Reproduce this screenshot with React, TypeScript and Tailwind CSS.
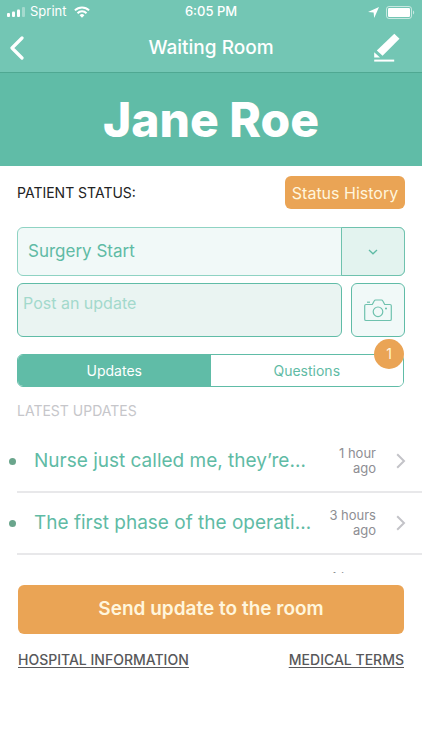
import React, { useState } from 'react';

const updates = [
  { text: 'Nurse just called me, they’re…', amount: '1 hour' },
  { text: 'The first phase of the operation is done', amount: '3 hours' },
  { text: 'Jane is being taken into surgery now', amount: '4 hours' },
];

const StatusBar = () => (
  <div className="grid h-6 grid-cols-3 items-center px-[7px] text-[13px] text-white">
    <div className="flex items-center gap-1">
      <svg width="18" height="10" viewBox="0 0 18 10" fill="currentColor" aria-hidden="true">
        <rect x="0" y="6" width="3" height="4" rx="1" />
        <rect x="5" y="4.5" width="3" height="5.5" rx="1" />
        <rect x="10" y="2.5" width="3" height="7.5" rx="1" />
        <rect x="15" y="0" width="3" height="10" rx="1" opacity="0.35" />
      </svg>
      <span className="ml-px">Sprint</span>
      <svg className="ml-1" width="16" height="12" viewBox="0 0 16 12" fill="none" stroke="currentColor" strokeWidth="2" aria-hidden="true">
        <path d="M0.9 4.4a10.2 10.2 0 0 1 14.2 0" />
        <path d="M3.5 7.2a6.4 6.4 0 0 1 9 0" />
        <path d="M8 11.8L5.6 9.3a3.4 3.4 0 0 1 4.8 0z" fill="currentColor" stroke="none" />
      </svg>
    </div>
    <span className="text-center font-medium">6:05 PM</span>
    <div className="flex items-center justify-end gap-[7px]">
      <svg width="11" height="11" viewBox="0 0 11 11" fill="currentColor" aria-hidden="true">
        <path d="M11 0L6.2 11L5.6 5.4L0 4.9z" />
      </svg>
      <svg width="29" height="13" viewBox="0 0 29 13" fill="none" aria-hidden="true">
        <rect x="0.5" y="0.5" width="25" height="12" rx="2.5" stroke="white" opacity="0.6" />
        <rect x="2" y="2" width="22" height="9" rx="1.2" fill="white" />
        <path d="M27 4.5c1.6 0.6 1.6 3.4 0 4z" fill="white" opacity="0.6" />
      </svg>
    </div>
  </div>
);

const NavBar = () => (
  <div className="flex h-12 items-center justify-between px-[9px] text-white">
    <button type="button" aria-label="Back" className="flex w-9">
      <svg width="16" height="24" viewBox="0 0 16 24" fill="none" stroke="currentColor" strokeWidth="3.2" strokeLinecap="round" strokeLinejoin="round">
        <path d="M13 2L3 12l10 10" />
      </svg>
    </button>
    <h1 className="text-[19px] font-medium">Waiting Room</h1>
    <button type="button" aria-label="Edit" className="flex w-9 justify-end pr-[13px]">
      <svg className="shrink-0" width="27" height="30" viewBox="0 0 27 30" fill="currentColor">
        <path d="M21.3 0.8l5.2 5L9.6 22.7l-5.8-5.3z" />
        <path d="M1.2 19.2l5.800 5.400H1.2z" />
        <path d="M1.2 26.6h20v2h-20z" />
      </svg>
    </button>
  </div>
);

const UpdateRow = ({ text, amount }: { text: string; amount: string }) => (
  <li>
    <a href="#update" className="ml-[17px] flex h-[62px] items-center border-b-2 border-[#e8e8ea] pr-4">
      <span className="-ml-2 size-[7px] shrink-0 rounded-full bg-[#6aa58c]" />
      <span className="ml-[18px] min-w-0 flex-1 truncate text-[19px] text-[#5fbba5]">{text}</span>
      <span className="ml-2 w-14 shrink-0 text-right text-[13px] leading-[15px] text-[#8e8e93]">
        {amount}
        <br />
        ago
      </span>
      <svg className="ml-5 shrink-0" width="10" height="16" viewBox="0 0 10 16" fill="none" stroke="#c3c3c8" strokeWidth="2" aria-hidden="true">
        <path d="M1.2 1.2L8 8l-6.8 6.8" />
      </svg>
    </a>
  </li>
);

const App = () => {
  const [tab, setTab] = useState('updates');

  return (
    <div className="min-h-screen bg-white font-['Inter','Liberation_Sans',sans-serif]">
      <header className="border-b border-[#4fa892] bg-[#73c6b4]">
        <StatusBar />
        <NavBar />
      </header>

      <div className="flex h-[93px] items-center justify-center bg-[#60bca7]">
        <h2 className="text-5xl font-extrabold text-white">Jane Roe</h2>
      </div>

      <main className="pt-[10px]">
        <section className="px-[17px]">
          <div className="flex items-center justify-between">
            <label htmlFor="status" className="text-sm text-[#222222]">PATIENT STATUS:</label>
            <button type="button" className="h-[33px] w-30 rounded-md bg-[#eaa455] text-base whitespace-nowrap text-[#fff6dd]">
              Status History
            </button>
          </div>

          <div className="mt-[18px] grid grid-cols-[1fr_64px]">
            <select
              id="status"
              className="col-span-2 col-start-1 row-start-1 h-[49px] appearance-none rounded-md border border-[#8fd3c3] bg-[#f1f9f8] px-[10px] text-[17px] text-[#5fbba5]"
            >
              <option>Surgery Start</option>
            </select>
            <span className="pointer-events-none col-start-2 row-start-1 flex items-center justify-center rounded-r-md border border-[#6fc2ae] bg-[#e3f3ef]">
              <svg width="10" height="6" viewBox="0 0 10 6" fill="none" stroke="#5fbba5" strokeWidth="1.3" aria-hidden="true">
                <path d="M1 1l4 3.8L9 1" />
              </svg>
            </span>
          </div>

          <div className="mt-[7px] flex gap-[9px]">
            <textarea
              aria-label="Post an update"
              placeholder="Post an update"
              className="h-[54px] min-w-0 flex-1 resize-none rounded-md border border-[#60bca7] bg-[#eaf4f2] px-[5px] py-[7px] text-base leading-6 text-[#5fbba5] placeholder:text-[#a3d9cc]"
            />
            <button type="button" aria-label="Add a photo" className="flex h-[54px] w-[54px] items-center justify-center rounded-md border border-[#60bca7] bg-[#f1f9f8]">
              <svg width="28" height="23" viewBox="0 0 28 23" fill="none" stroke="#6fc2ae" strokeWidth="1.2" strokeLinejoin="round">
                <path d="M2 5.5h6.3l2-3.7q.4-.8 1.2-.8h6q.8 0 1.2.8l2 3.7H26q1.3 0 1.3 1.3v13.4q0 1.3-1.3 1.3H2Q.7 21.5.7 20.2V6.8Q.7 5.5 2 5.5z" />
                <circle cx="14" cy="12.8" r="4.8" />
                <path d="M3 3.2h3" />
                <circle cx="22" cy="9.5" r="1" fill="#60bca7" stroke="none" />
              </svg>
            </button>
          </div>

          <div className="relative mt-[17px] mr-px">
            <div role="tablist" className="grid h-[33px] grid-cols-2 overflow-hidden rounded-md border border-[#60bca7] text-sm">
              <button
                type="button"
                role="tab"
                aria-selected={tab === 'updates'}
                onClick={() => setTab('updates')}
                className={tab === 'updates' ? 'bg-[#60bca7] text-white' : 'bg-white text-[#5fbba5]'}
              >
                Updates
              </button>
              <button
                type="button"
                role="tab"
                aria-selected={tab === 'questions'}
                onClick={() => setTab('questions')}
                className={tab === 'questions' ? 'bg-[#60bca7] text-white' : 'bg-white text-[#5fbba5]'}
              >
                Questions
              </button>
            </div>
            <span className="absolute -top-[15px] right-0 flex size-[30px] items-center justify-center rounded-full bg-[#eaa455] text-sm text-[#fff6dd]">
              1
            </span>
          </div>

          <h3 className="mt-[14px] text-sm text-[#c6c6ca]">LATEST UPDATES</h3>
        </section>

        <ul className="mt-[10px] h-[142px] overflow-hidden">
          {updates.map((update, index) => (
            <UpdateRow key={index} text={update.text} amount={update.amount} />
          ))}
        </ul>

        <section className="px-[18px] pt-3">
          <button type="button" className="h-[49px] w-full rounded-md bg-[#eaa455] text-[19px] font-semibold text-[#fff6dd]">
            Send update to the room
          </button>
          <div className="mt-4 flex justify-between text-sm font-medium text-[#58585a] underline underline-offset-2">
            <a href="#hospital">HOSPITAL INFORMATION</a>
            <a href="#terms">MEDICAL TERMS</a>
          </div>
        </section>
      </main>
    </div>
  );
};

export default App;
